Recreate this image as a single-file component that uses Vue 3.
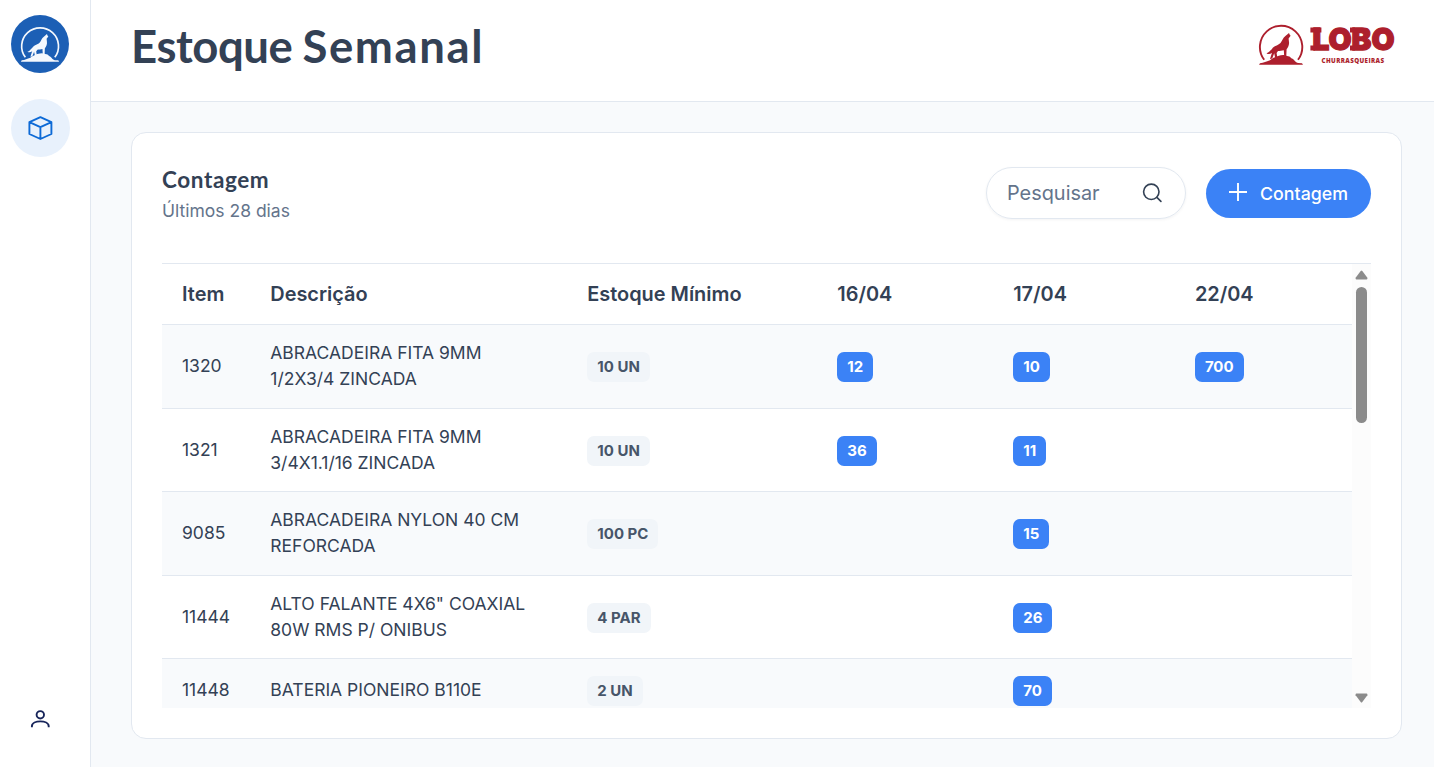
<script setup>
const dates = ['16/04', '17/04', '22/04']
const rows = [
  { item: '1320', desc: 'ABRACADEIRA FITA 9MM 1/2X3/4 ZINCADA', min: '10 UN', counts: [12, 10, 700] },
  { item: '1321', desc: 'ABRACADEIRA FITA 9MM 3/4X1.1/16 ZINCADA', min: '10 UN', counts: [36, 11, null] },
  { item: '9085', desc: 'ABRACADEIRA NYLON 40 CM REFORCADA', min: '100 PC', counts: [null, 15, null] },
  { item: '11444', desc: 'ALTO FALANTE 4X6" COAXIAL 80W RMS P/ ONIBUS', min: '4 PAR', counts: [null, 26, null] },
  { item: '11448', desc: 'BATERIA PIONEIRO B110E', min: '2 UN', counts: [null, 70, null] },
]
</script>

<template>
  <div class="shell">
    <svg class="defs" width="0" height="0">
      <symbol id="wolf" viewBox="0 0 46 44">
        <path d="M6.2 36.8A21.2 21.2 0 1 1 40 36.8" fill="none" stroke="currentColor" stroke-width="1.9" />
        <path d="M1 41.8 L2 40.2 C6 39.8 8 38.5 12 37.2 C14 35.2 17 34.4 20 33 C24 31.6 27 31.6 29 33 C33 33.2 32 35 35 36 C37 37.6 37 39 40 40 L44 40.2 L45 41.8Z" fill="currentColor" />
        <path d="M31 10 L31.6 11.6 L32.6 12.8 L30.6 15.4 L31 19 C31.4 22 30 24.5 28.6 26.2 L28.3 33 L26.2 33 L25.8 27.2 C24 27.8 21.5 27.8 20 28 L18.6 30 L19.4 35 L17.2 35 L16.2 30.2 L14.2 35.6 L12 36 L14 29.8 C12 31.4 10 31.4 8.5 30.2 C11 29.8 12 27.6 14 26 C16 22.6 20 22.6 22.5 20 C24.6 17.6 24.8 14.6 27.4 13Z" fill="currentColor" />
      </symbol>
    </svg>

    <aside class="sidebar">
      <div class="brand"><svg width="40" height="39"><use href="#wolf" /></svg></div>
      <a class="nav">
        <svg width="26" height="26" viewBox="0 0 26 26" fill="none" stroke="#0d6ad6" stroke-width="1.9" stroke-linejoin="round">
          <path d="M13.4 2.2 L24.4 7.2 V19 L13.4 24 L2.4 19 V7.2Z M2.4 7.2 L13.4 12.2 L24.4 7.2 M13.4 12.2 V24" />
        </svg>
      </a>
      <svg class="user" width="20" height="20" viewBox="0 0 20 20" fill="none" stroke="#17255a" stroke-width="1.9">
        <circle cx="10.3" cy="5.8" r="3.7" />
        <path d="M1.9 18.2 V17.2 C1.9 10.8 18.7 10.8 18.7 17.2 V18.2" />
      </svg>
    </aside>

    <div class="main">
      <header class="topbar">
        <h1><span class="tight">Estoque</span> <span class="wide">Semanal</span></h1>
        <div class="logo">
          <svg width="46" height="44"><use href="#wolf" /></svg>
          <div class="wordmark">
            <svg class="name" width="88" height="32" viewBox="0 0 88 32" fill="currentColor">
              <text class="lobo" x="4.5" y="25.8" textLength="82" lengthAdjust="spacingAndGlyphs">LOBO</text>
              <path d="M2.4 3.4 H13.4 V8.4 H2.4Z M2.4 21.6 H7 V26.5 H2.4Z M42 3.4 H47 V8.4 H42Z M42 21.6 H47 V26.5 H42Z" />
            </svg>
            <svg class="subline" width="64" height="8" viewBox="0 0 64 8" fill="currentColor">
              <text class="sub" x="0.5" y="6.6" textLength="62.5">CHURRASQUEIRAS</text>
            </svg>
          </div>
        </div>
      </header>

      <section class="card">
        <div class="card-head">
          <div>
            <h2>Contagem</h2>
            <p>Últimos 28 dias</p>
          </div>
          <div class="actions">
            <div class="search">
              <span>Pesquisar</span>
              <svg width="20" height="20" viewBox="0 0 20 20" fill="none" stroke="#334155" stroke-width="1.6" stroke-linecap="round">
                <circle cx="9.3" cy="8.8" r="7.7" />
                <path d="M14.9 14.4 L18.9 18.4" />
              </svg>
            </div>
            <button class="add">
              <svg width="18" height="18" viewBox="0 0 18 18" stroke="#fff" stroke-width="1.9"><path d="M9 0 V18 M0 9 H18" /></svg>
              <span>Contagem</span>
            </button>
          </div>
        </div>

        <div class="table-area">
          <div class="viewport">
            <table>
              <colgroup>
                <col class="c-item"><col class="c-desc"><col class="c-min"><col class="c-d1"><col class="c-d2"><col>
              </colgroup>
              <thead>
                <tr>
                  <th>Item</th><th>Descrição</th><th>Estoque Mínimo</th>
                  <th v-for="d in dates" :key="d">{{ d }}</th>
                </tr>
              </thead>
              <tbody>
                <tr v-for="r in rows" :key="r.item">
                  <td>{{ r.item }}</td>
                  <td>{{ r.desc }}</td>
                  <td><span class="badge">{{ r.min }}</span></td>
                  <td v-for="(c, i) in r.counts" :key="i"><span v-if="c !== null" class="badge blue">{{ c }}</span></td>
                </tr>
              </tbody>
            </table>
          </div>
          <div class="scrollbar">
            <svg width="13" height="10" viewBox="0 0 13 10"><path d="M5.7 1 Q6.5 0 7.3 1 L12.4 7.8 Q12.8 9.4 11.6 9.4 H1.4 Q.2 9.4 .6 7.8Z" /></svg>
            <div class="thumb"></div>
            <svg class="down" width="13" height="10" viewBox="0 0 13 10"><path d="M5.7 9 Q6.5 10 7.3 9 L12.4 2.2 Q12.8 .6 11.6 .6 H1.4 Q.2 .6 .6 2.2Z" /></svg>
          </div>
        </div>
      </section>
    </div>
  </div>
</template>

<style>
body { overflow: hidden; background: #f8fafc; }
</style>

<style scoped>
* { box-sizing: border-box; }
.shell { display: flex; height: 767px; font-family: Inter, "Liberation Sans", sans-serif; color: #334155; background: #f8fafc; }
.defs { position: absolute; }
.sidebar { width: 91px; flex: none; background: #fff; border-right: 1px solid #e2e8f0; padding: 15px 20px 38px 11px; display: flex; flex-direction: column; }
.brand { width: 58px; height: 58px; border-radius: 50%; background: #1c5fb5; color: #f4f8fd; display: flex; align-items: center; justify-content: center; }
.nav { width: 59px; height: 58px; margin-top: 26px; border-radius: 50%; background: #e8f1fc; display: flex; align-items: center; justify-content: center; padding-right: 1px; }
.user { margin: auto 0 0 19px; }
.main { flex: 1; min-width: 0; display: flex; flex-direction: column; }
.topbar { height: 102px; flex: none; background: #fff; border-bottom: 1px solid #e2e8f0; padding: 17px 38px 0 40px; display: flex; justify-content: space-between; align-items: flex-start; }
h1, h2, p { margin: 0; }
h1 { font: 700 45.5px/58px Lato, sans-serif; }
.tight { letter-spacing: -0.45px; }
.wide { letter-spacing: 1.6px; margin-left: -1px; }
.logo { display: flex; gap: 4px; margin-top: 6px; color: #ad1f2d; }
.wordmark { display: flex; flex-direction: column; padding-top: 1px; }
.name { overflow: visible; }
.lobo { font: 900 30px/30px Inter, sans-serif; stroke: currentColor; stroke-width: 1.3px; }
.subline { margin: 0 0 0 13px; }
.sub { font: 800 6.2px/8px "Open Sans", sans-serif; }
.card { width: 1271px; height: 607px; margin: 30px 0 0 40px; background: #fff; border: 1px solid #e2e8f0; border-radius: 15px; padding: 30px; display: flex; flex-direction: column; }
.card-head { display: flex; justify-content: space-between; height: 100px; flex: none; }
h2 { font: 700 22.5px/34px Lato, sans-serif; letter-spacing: 0.6px; }
p { font-size: 17.5px; line-height: 27px; color: #64748b; }
.actions { display: flex; gap: 20px; align-items: center; height: 52px; margin-top: 4px; }
.search { width: 200px; height: 52px; border: 1px solid #e2e8f0; border-radius: 26px; padding: 0 22px 0 20px; display: flex; justify-content: space-between; align-items: center; font-size: 19.9px; color: #64748b; box-shadow: 0 1px 3px rgba(15, 23, 42, .05); }
.search svg { margin-right: 1px; }
.add { width: 165px; height: 49px; border: 0; border-radius: 25px; background: #3b82f6; color: #fff; font: 500 17.8px Inter, sans-serif; padding: 0 23px; display: flex; align-items: center; justify-content: space-between; margin-top: 1px; }
.add svg { margin-bottom: 3px; }
.table-area { height: 445px; display: flex; border-top: 1px solid #e2e8f0; }
.viewport { width: 1190px; overflow: hidden; }
table { width: 1190px; table-layout: fixed; border-collapse: separate; border-spacing: 0; }
.c-item { width: 88.3px; }
.c-desc { width: 317px; }
.c-min { width: 250px; }
.c-d1 { width: 175.9px; }
.c-d2 { width: 181.7px; }
th, td { padding: 0 20px; text-align: left; vertical-align: middle; border-bottom: 1px solid #e2e8f0; }
th { height: 61px; font-size: 19.9px; font-weight: 600; }
td { height: 83.5px; font-size: 17.5px; line-height: 26.25px; }
tbody tr:nth-child(odd) td { background: #f8fafc; }
tbody tr:last-child td { height: 64px; }
.badge { display: block; width: max-content; height: 30px; margin-top: 1.6px; padding: 0 10px; border-radius: 7px; background: #f1f5f9; color: #475569; font-size: 15px; line-height: 30px; font-weight: 700; }
.badge.blue { background: #3b82f6; color: #fff; }
.scrollbar { width: 19px; background: #fcfcfc; display: flex; flex-direction: column; align-items: center; padding: 6px 0 5px; }
.scrollbar svg { fill: #8b8b8b; }
.thumb { width: 11px; height: 136px; border-radius: 6px; background: #8b8b8b; margin-top: 7px; }
.down { margin-top: auto; }
</style>
